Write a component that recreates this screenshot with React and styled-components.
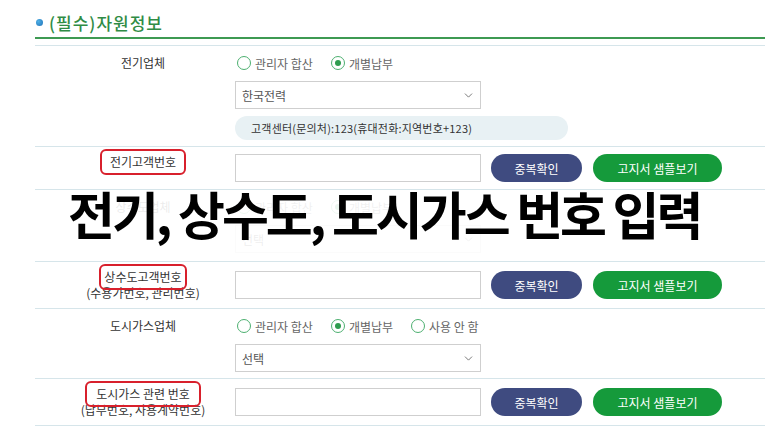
import React from "react";
import styled, { createGlobalStyle } from "styled-components";
import { ChevronDown } from "lucide-react";

const GlobalStyle = createGlobalStyle`
  html, body { margin: 0; padding: 0; background: #fff; }
  body { font-family: "Noto Sans CJK KR", "Noto Sans", sans-serif; color: #333; }
`;

const Page = styled.div`
  width: 768px;
  height: 432px;
  box-sizing: border-box;
  padding: 0 3px 0 35px;
  overflow: hidden;
`;

const Header = styled.div`
  display: flex;
  align-items: center;
  gap: 6px;
  padding-top: 8px;
  padding-left: 1px;
  height: 29px;
  border-bottom: 2px solid #3e9a52;
`;

const Dot = styled.span`
  width: 7px;
  height: 7px;
  border-radius: 50%;
  background: radial-gradient(circle at 35% 35%, #4fb0e6, #1f72b8);
`;

const Title = styled.h2`
  margin: 0;
  font-size: 17px;
  font-weight: 500;
  color: #2f8c45;
  letter-spacing: 1px;
`;

const Table = styled.div`
  margin-top: 6px;
  border-top: 1px solid #d6e5ea;
`;

const Row = styled.div`
  position: relative;
  display: grid;
  grid-template-columns: 200px 1fr;
  border-bottom: 1px solid #d6e5ea;
  padding: ${(p) => p.$pad || "7px 0 7px"};
`;

const LabelCell = styled.div`
  padding-left: 16px;
  text-align: center;
  font-size: 12px;
  color: #333;
  line-height: ${(p) => (p.$tall ? "22px" : "16px")};
`;

const LabelLine = styled.div`
  line-height: 16px;
`;

const Annot = styled.span`
  display: inline-block;
  padding: 0 ${(p) => p.$px || 0}px;
  outline: 2px solid #d8202c;
  outline-offset: 3px;
  border-radius: 1px;
  position: relative;
  z-index: 1;
`;

const Sub = styled.div`
  line-height: 16px;
`;

const ValueCell = styled.div`
  display: flex;
  flex-direction: column;
  gap: 7px;
`;

const InputRow = styled.div`
  display: flex;
  align-items: center;
`;

const RadioLine = styled.div`
  height: 22px;
  display: flex;
  align-items: center;
`;

const RadioItem = styled.label`
  display: inline-flex;
  align-items: center;
  gap: 4px;
  margin-right: 16px;
  font-size: 12px;
  color: #666;
  padding-left: 2px;
`;

const Circle = styled.span`
  width: 12px;
  height: 12px;
  border: 1px solid #4db070;
  border-radius: 50%;
  display: inline-flex;
  align-items: center;
  justify-content: center;
  background: #fff;
  &::after {
    content: "";
    width: 6px;
    height: 6px;
    border-radius: 50%;
    background: ${(p) => (p.$checked ? "#2e9c4f" : "transparent")};
  }
`;

const SelectBox = styled.div`
  width: 246px;
  height: 28px;
  box-sizing: border-box;
  border: 1px solid #cfcfcf;
  background: #fff;
  display: flex;
  align-items: center;
  justify-content: space-between;
  padding: 0 5px 0 6px;
  font-size: 12px;
  color: #555;
`;

const Pill = styled.div`
  width: 333px;
  height: 24px;
  box-sizing: border-box;
  border-radius: 12px;
  background: #e8f1f4;
  display: flex;
  align-items: center;
  padding-left: 16px;
  font-size: 11px;
  color: #333;
  letter-spacing: 0.2px;
`;

const TextInput = styled.div`
  width: 246px;
  height: 28px;
  box-sizing: border-box;
  border: 1px solid #cfcfcf;
  background: #fff;
`;

const Btn = styled.button`
  margin-left: ${(p) => p.$ml || 10}px;
  width: ${(p) => p.$w}px;
  height: 28px;
  border: none;
  border-radius: 14px;
  background: ${(p) => p.$bg};
  color: #fff;
  font-family: inherit;
  font-size: 12px;
  padding: 0;
  cursor: pointer;
`;

const Cover = styled.div`
  position: absolute;
  inset: 0;
  background: rgba(255, 255, 255, 0.9);
  padding-left: 33px;
  display: flex;
  align-items: flex-start;
`;

const BigText = styled.div`
  margin-top: -2px;
  font-size: 51px;
  font-weight: 700;
  line-height: 51px;
  letter-spacing: -3px;
  color: #000;
  white-space: nowrap;
`;

function Radio({ checked, children }) {
  return (
    <RadioItem>
      <Circle $checked={checked} />
      {children}
    </RadioItem>
  );
}

function Select({ value }) {
  return (
    <SelectBox>
      <span>{value}</span>
      <ChevronDown size={13} strokeWidth={1.6} color="#666" />
    </SelectBox>
  );
}

function NumberRow({ label, sub, px }) {
  return (
    <Row $pad="7px 0 7px">
      <LabelCell>
        <LabelLine>
          <Annot $px={px}>{label}</Annot>
        </LabelLine>
        {sub && <Sub>{sub}</Sub>}
      </LabelCell>
      <InputRow>
        <TextInput />
        <Btn $w={91} $bg="#3f4b80">중복확인</Btn>
        <Btn $w={129} $ml={11} $bg="#159a3b">고지서 샘플보기</Btn>
      </InputRow>
    </Row>
  );
}

export default function App() {
  return (
    <>
      <GlobalStyle />
      <Page>
        <Header>
          <Dot />
          <Title>(필수)자원정보</Title>
        </Header>
        <Table>
          <Row $pad="6px 0 6px">
            <LabelCell $tall>전기업체</LabelCell>
            <ValueCell>
              <RadioLine>
                <Radio>관리자 합산</Radio>
                <Radio checked>개별납부</Radio>
              </RadioLine>
              <Select value="한국전력" />
              <Pill>고객센터(문의처):123(휴대전화:지역번호+123)</Pill>
            </ValueCell>
          </Row>
          <NumberRow label="전기고객번호" px={5} />
          <Row $pad="6px 0 8px">
            <LabelCell $tall>상수도업체</LabelCell>
            <ValueCell>
              <RadioLine>
                <Radio>관리자 합산</Radio>
                <Radio checked>개별납부</Radio>
              </RadioLine>
              <Select value="선택" />
            </ValueCell>
            <Cover>
              <BigText>전기, 상수도, 도시가스 번호 입력</BigText>
            </Cover>
          </Row>
          <NumberRow label="상수도고객번호" sub="(수용가번호, 관리번호)" px={0} />
          <Row $pad="6px 0 6px">
            <LabelCell $tall>도시가스업체</LabelCell>
            <ValueCell>
              <RadioLine>
                <Radio>관리자 합산</Radio>
                <Radio checked>개별납부</Radio>
                <Radio>사용 안 함</Radio>
              </RadioLine>
              <Select value="선택" />
            </ValueCell>
          </Row>
          <NumberRow label="도시가스 관련 번호" sub="(납부번호, 사용계약번호)" px={6} />
        </Table>
      </Page>
    </>
  );
}
